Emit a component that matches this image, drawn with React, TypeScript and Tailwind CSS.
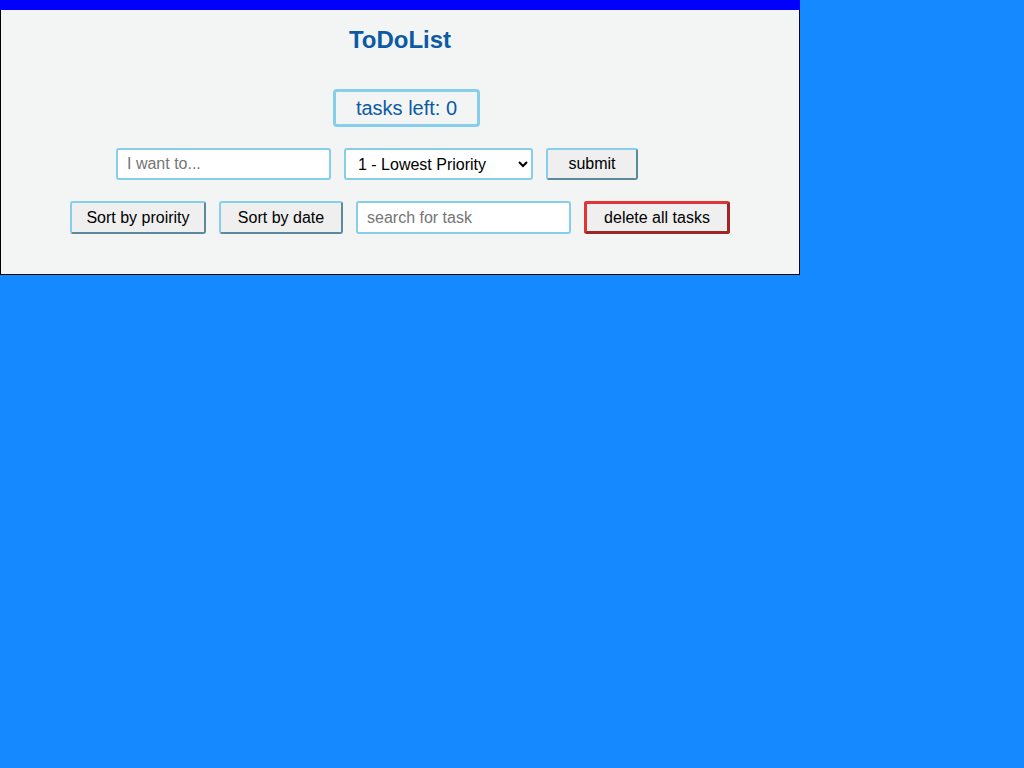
import React from 'react';

const font = { fontFamily: '"Liberation Sans", Arial, sans-serif' };

const btn =
  'h-full rounded-[3px] border-2 border-t-[#87ceeb] border-l-[#87ceeb] border-r-[#5a8a9c] border-b-[#5a8a9c] bg-[#efefef] text-[16px] text-black';

export default function App() {
  return (
    <div className="min-h-[768px] w-full bg-[#1589ff]" style={font}>
      <div className="w-[800px] bg-[#f3f5f4] border-x border-b border-black">
        <div className="h-[10px] bg-[#0000ff] -mx-px" />
        <div className="pt-[16px] h-[44px] text-center text-[24px] leading-[28px] font-bold text-[#0b5aa3]">
          ToDoList
        </div>
        <div className="mt-[35px] flex justify-center pl-[13px]">
          <div className="w-[147px] h-[38px] rounded-[4px] border-[3px] border-[#87ceeb] flex items-center justify-center text-[20px] text-[#0b5aa3]">
            tasks left: 0
          </div>
        </div>
        <div className="mt-[21px] h-[32px] flex justify-center gap-[13px] pr-[46px]">
          <input
            placeholder="I want to..."
            className="w-[215px] h-full rounded-[3px] border-2 border-[#87ceeb] bg-white px-[9px] text-[16px] text-black placeholder:text-[#757575] outline-none"
          />
          <select
            defaultValue="1"
            className="w-[189px] h-full rounded-[3px] border-2 border-[#87ceeb] bg-white pl-[8px] pr-[4px] text-[16px] text-black outline-none"
          >
            <option value="1">1 - Lowest Priority</option>
            <option value="2">2 - Low Priority</option>
            <option value="3">3 - Medium Priority</option>
            <option value="4">4 - High Priority</option>
            <option value="5">5 - Highest Priority</option>
          </select>
          <button className={`${btn} w-[92px]`}>submit</button>
        </div>
        <div className="mt-[21px] h-[33px] flex justify-center gap-[13px]">
          <button className={`${btn} w-[136px]`}>Sort by proirity</button>
          <button className={`${btn} w-[124px]`}>Sort by date</button>
          <input
            placeholder="search for task"
            className="w-[215px] h-full rounded-[3px] border-2 border-[#87ceeb] bg-white px-[9px] text-[16px] text-black placeholder:text-[#757575] outline-none"
          />
          <button className="w-[146px] h-full rounded-[3px] border-[3px] border-t-[#e03535] border-l-[#e03535] border-r-[#a02525] border-b-[#a02525] bg-[#efefef] text-[16px] text-black">
            delete all tasks
          </button>
        </div>
        <div className="h-[40px]" />
      </div>
    </div>
  );
}
